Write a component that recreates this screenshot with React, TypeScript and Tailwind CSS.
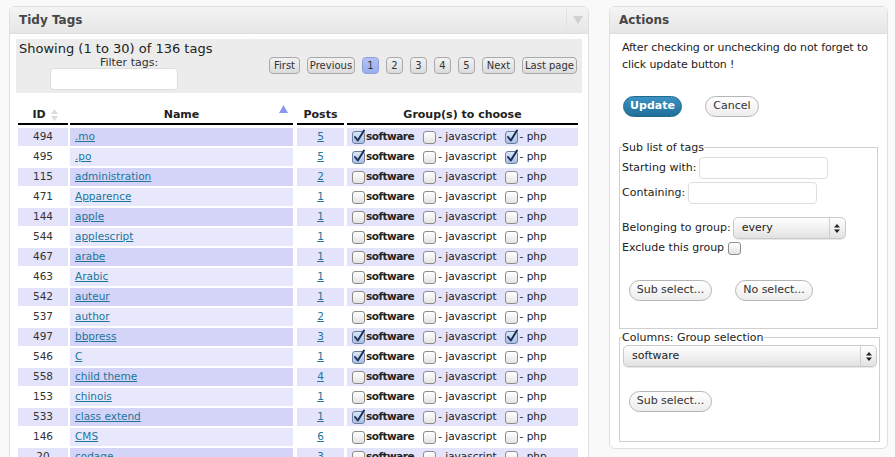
import React from "react";

const rows: [string, string, string, boolean, boolean][] = [
  ["494", ".mo", "5", true, true],
  ["495", ".po", "5", true, true],
  ["115", "administration", "2", false, false],
  ["471", "Apparence", "1", false, false],
  ["144", "apple", "1", false, false],
  ["544", "applescript", "1", false, false],
  ["467", "arabe", "1", false, false],
  ["463", "Arabic", "1", false, false],
  ["542", "auteur", "1", false, false],
  ["537", "author", "2", false, false],
  ["497", "bbpress", "3", true, true],
  ["546", "C", "1", true, false],
  ["558", "child theme", "4", false, false],
  ["153", "chinois", "1", false, false],
  ["533", "class extend", "1", true, false],
  ["146", "CMS", "6", false, false],
  ["20", "codage", "3", false, false],
];

function Box({ checked }: { checked?: boolean }) {
  return (
    <span className="relative inline-block w-[13px] h-[13px] shrink-0 align-middle">
      <span
        className={
          "absolute inset-0 rounded-[3px] border " +
          (checked
            ? "border-[#6d7f9c] bg-gradient-to-b from-[#dbe6f7] to-[#a9c0e6]"
            : "border-[#8d8d8d] bg-gradient-to-b from-[#ffffff] to-[#e3e3e3]")
        }
      />
      {checked && (
        <svg className="absolute left-[1px] top-[-2px]" width="13" height="14" viewBox="0 0 13 14">
          <path d="M2 8 L4.8 11.5 L11 1.5" fill="none" stroke="#1c2f57" strokeWidth="2" strokeLinecap="round" strokeLinejoin="round" />
        </svg>
      )}
    </span>
  );
}

function PageBtn({ label, w, active }: { label: string; w: string; active?: boolean }) {
  return (
    <span
      className={
        "h-[17px] flex items-center justify-center whitespace-nowrap rounded-[4px] border text-[10px] leading-none " +
        w +
        " " +
        (active
          ? "border-[#8d9fd8] bg-gradient-to-b from-[#b3c2f5] to-[#9aaeee] text-[#333]"
          : "border-[#a9a9a9] bg-gradient-to-b from-[#f2f2f2] to-[#dcdcdc] text-[#333]")
      }
    >
      {label}
    </span>
  );
}

function Select({ value, w }: { value: string; w: string }) {
  return (
    <div
      className={
        "h-[22px] flex items-stretch rounded-[5px] border border-[#c9c9c9] bg-gradient-to-b from-[#ffffff] via-[#f1f1f1] to-[#e2e2e2] shadow-[0_1px_1px_rgba(0,0,0,0.1)] " +
        w
      }
    >
      <span className="flex-1 flex items-center pl-[8px] text-[11px] text-[#222]">{value}</span>
      <span className="w-[16px] border-l border-[#cfcfcf] flex items-center justify-center">
        <svg width="6" height="9" viewBox="0 0 6 9">
          <path d="M0 3.5 L3 0 L6 3.5 Z M0 5.5 L3 9 L6 5.5 Z" fill="#222" />
        </svg>
      </span>
    </div>
  );
}

function Pill({ label, w }: { label: string; w: string }) {
  return (
    <span
      className={
        "h-[21px] flex items-center justify-center whitespace-nowrap rounded-full border border-[#b5b5b5] bg-gradient-to-b from-[#ffffff] to-[#ededed] text-[11px] text-[#333] " +
        w
      }
    >
      {label}
    </span>
  );
}

export default function App() {
  return (
    <div
      className="w-[895px] h-[457px] overflow-hidden bg-[#f9f9f9] text-[#333] flex items-start"
      style={{ fontFamily: '"DejaVu Sans", "Liberation Sans", sans-serif' }}
    >
      {/* Left panel */}
      <div className="ml-[9px] mt-[6px] w-[580px] h-[500px] rounded-t-[6px] border border-[#dfdfdf] bg-white overflow-hidden shrink-0">
        <div className="h-[27px] flex items-center bg-gradient-to-b from-[#f4f4f4] to-[#e6e6e6] border-b border-[#dfdfdf]">
          <span className="pl-[9px] text-[12px] font-bold text-[#464646] flex-1">Tidy Tags</span>
          <span className="w-[22px] h-full border-l border-[#e3e3e3] flex items-center justify-center">
            <svg width="10" height="8" viewBox="0 0 10 8">
              <path d="M0 0 L10 0 L5 8 Z" fill="#d0d0d0" />
            </svg>
          </span>
        </div>
        <div className="px-[6px] pt-[5px]">
          <div className="h-[54px] bg-[#ececec] flex">
            <div className="w-[240px] pl-[3px] pt-[2px]">
              <div className="text-[13px] leading-[16px] text-[#222] whitespace-nowrap">Showing (1 to 30) of 136 tags</div>
              <div className="text-[11px] leading-[11px] text-[#333] text-center w-[220px]">Filter tags:</div>
              <div className="ml-[31px] mt-0 w-[128px] h-[22px] bg-white rounded-[4px] border border-[#dedede]" />
            </div>
            <div className="flex-1 flex items-start justify-end gap-[7px] pt-[18px] pr-[5px]">
              <PageBtn label="First" w="w-[31px]" />
              <PageBtn label="Previous" w="w-[48px]" />
              <PageBtn label="1" w="w-[17px]" active />
              <PageBtn label="2" w="w-[17px]" />
              <PageBtn label="3" w="w-[17px]" />
              <PageBtn label="4" w="w-[17px]" />
              <PageBtn label="5" w="w-[17px]" />
              <PageBtn label="Next" w="w-[33px]" />
              <PageBtn label="Last page" w="w-[55px]" />
            </div>
          </div>

          {/* table header */}
          <div className="mt-[14px] flex gap-[2px] pl-[2px] text-[11px] font-bold text-[#222]">
            <div className="w-[50px] h-[18px] border-b-2 border-black flex items-center justify-center gap-[5px] pl-[4px]">
              <span>ID</span>
              <svg width="7" height="14" viewBox="0 0 7 14">
                <path d="M0 6 L3.5 1 L7 6 Z M0 8 L3.5 13 L7 8 Z" fill="#dcdcdc" />
              </svg>
            </div>
            <div className="relative w-[223px] h-[18px] border-b-2 border-black flex items-center justify-center">
              <span>Name</span>
              <svg className="absolute right-[5px] top-[-2px]" width="9" height="8" viewBox="0 0 9 8">
                <path d="M0 8 L4.5 0 L9 8 Z" fill="#8a97ee" />
              </svg>
            </div>
            <div className="ml-[2px] w-[47px] h-[18px] border-b-2 border-black flex items-center justify-center">Posts</div>
            <div className="ml-[1px] w-[231px] h-[18px] border-b-2 border-black flex items-center justify-center">Group(s) to choose</div>
          </div>

          <div className="mt-[3px] flex flex-col gap-[2px] pl-[2px] text-[10.5px]">
            {rows.map(([id, name, posts, sw, php], i) => {
              const odd = i % 2 === 0;
              const cell = odd ? "bg-[#e3e3fb]" : "bg-[#ffffff]";
              const ncell = odd ? "bg-[#d4d4f8]" : "bg-[#e8e8fc]";
              return (
                <div key={id} className="flex gap-[2px] h-[18px]">
                  <div className={"w-[50px] flex items-center justify-center text-[#333] " + cell}>{id}</div>
                  <div className={"w-[223px] flex items-center pl-[5px] " + ncell}>
                    <span className="text-[#21759b] underline">{name}</span>
                  </div>
                  <div className={"ml-[2px] w-[47px] flex items-center justify-center " + cell}>
                    <span className="text-[#21759b] underline">{posts}</span>
                  </div>
                  <div className={"ml-[1px] w-[231px] flex items-center pl-[5px] whitespace-nowrap text-[#222] " + cell}>
                    <Box checked={sw} />
                    <span className="font-bold ml-[1px] tracking-[-0.5px]">software</span>
                    <span className="ml-[9px] flex"><Box /></span>
                    <span className="ml-[2px]">- javascript</span>
                    <span className="ml-[8px] flex"><Box checked={php} /></span>
                    <span className="ml-[2px]">- php</span>
                  </div>
                </div>
              );
            })}
          </div>
        </div>
      </div>

      {/* Right panel */}
      <div className="ml-[20px] mt-[6px] w-[279px] h-[443px] rounded-[6px] border border-[#dfdfdf] bg-white overflow-hidden shrink-0 flex flex-col">
        <div className="h-[27px] shrink-0 flex items-center bg-gradient-to-b from-[#f4f4f4] to-[#e6e6e6] border-b border-[#dfdfdf]">
          <span className="pl-[9px] text-[12px] font-bold text-[#464646]">Actions</span>
        </div>
        <div className="px-[9px] flex flex-col">
          <p className="mt-[5px] pl-[3px] text-[11px] leading-[17px] text-[#222] tracking-[-0.1px]">
            After checking or unchecking do not forget to click update button !
          </p>
          <div className="mt-[23px] flex items-center">
            <span className="ml-[4px] w-[59px] h-[21px] flex items-center justify-center rounded-full border border-[#1f6a8e] bg-gradient-to-b from-[#3c92c3] to-[#1f6f98] text-white text-[11px] font-bold">
              Update
            </span>
            <span className="ml-[23px]"><Pill label="Cancel" w="w-[54px]" /></span>
          </div>

          <fieldset className="mt-[24px] h-[188px] border border-[#cfcfcf] pl-[2px] pr-[2px] text-[11px] text-[#222]">
            <legend className="px-0 leading-[13px]">Sub list of tags</legend>
            <div className="flex items-center mt-[3px] h-[22px]">
              <span>Starting with:</span>
              <span className="ml-[3px] w-[129px] h-[22px] rounded-[4px] border border-[#dedede] bg-white" />
            </div>
            <div className="flex items-center mt-[3px] h-[22px]">
              <span>Containing:</span>
              <span className="ml-[3px] w-[129px] h-[22px] rounded-[4px] border border-[#dedede] bg-white" />
            </div>
            <div className="flex items-center mt-[13px] h-[22px]">
              <span>Belonging to group:</span>
              <span className="ml-[2px]"><Select value="every" w="w-[113px]" /></span>
            </div>
            <div className="flex items-center h-[16px] mt-[1px]">
              <span>Exclude this group</span>
              <span className="ml-[4px] flex"><Box /></span>
            </div>
            <div className="flex items-center mt-[24px] pl-[7px]">
              <Pill label="Sub select..." w="w-[83px]" />
              <span className="ml-[23px]"><Pill label="No select..." w="w-[78px]" /></span>
            </div>
          </fieldset>

          <fieldset className="mt-[2px] h-[111px] border border-[#cfcfcf] pl-[2px] pr-[2px] text-[11px] text-[#222]">
            <legend className="px-0 leading-[13px]">Columns: Group selection</legend>
            <div className="mt-[1px] pl-[1px]">
              <Select value="software" w="w-[254px]" />
            </div>
            <div className="mt-[24px] pl-[7px]">
              <Pill label="Sub select..." w="w-[83px]" />
            </div>
          </fieldset>
        </div>
      </div>
    </div>
  );
}
